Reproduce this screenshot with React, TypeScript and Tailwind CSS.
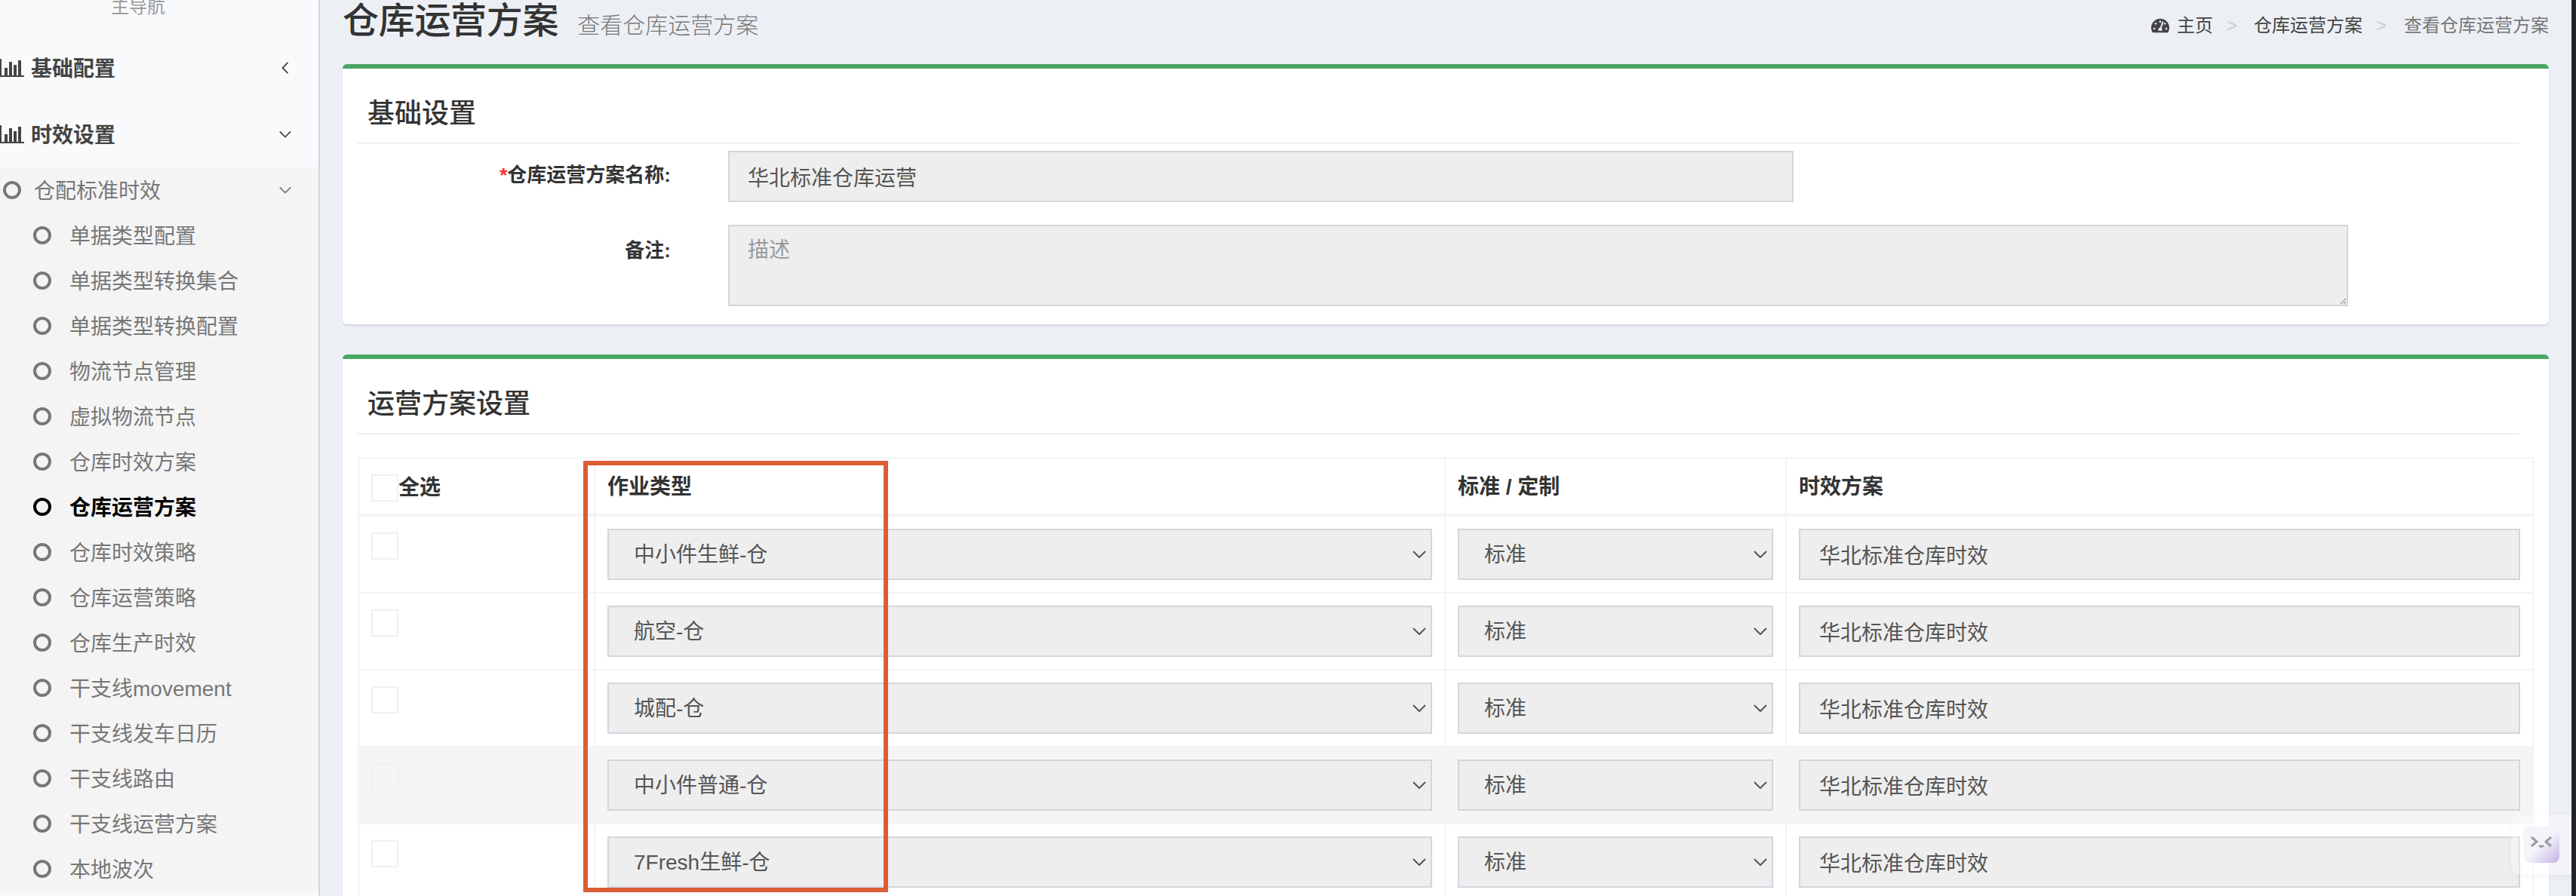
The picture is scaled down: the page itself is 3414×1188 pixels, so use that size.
import React from "react";
import { FaTachometerAlt } from "react-icons/fa";

const font = "font-['Liberation_Sans','Noto_Sans_CJK_SC',sans-serif]";

function Chevron({ dir, className }: { dir: "down" | "left"; className: string }) {
  return dir === "down" ? (
    <svg viewBox="0 0 18 10" className={className} fill="none" stroke="currentColor" strokeWidth="2">
      <polyline points="1,1 9,9 17,1" />
    </svg>
  ) : (
    <svg viewBox="0 0 10 18" className={className} fill="none" stroke="currentColor" strokeWidth="2">
      <polyline points="9,1 1,9 9,17" />
    </svg>
  );
}

function BarIcon() {
  return (
    <svg viewBox="0 0 32 24" className="w-[32px] h-[24px] shrink-0" fill="currentColor">
      <rect x="0" y="0" width="2" height="24" />
      <rect x="0" y="22" width="32" height="2" />
      <rect x="6" y="12" width="4" height="10" />
      <rect x="12" y="4" width="4" height="18" />
      <rect x="18" y="8" width="4" height="14" />
      <rect x="24" y="2" width="4" height="20" />
    </svg>
  );
}

function Ring({ active }: { active?: boolean }) {
  return (
    <span
      className={
        active
          ? "block w-[24px] h-[24px] rounded-full border-[4px] border-black shrink-0"
          : "block w-[24px] h-[24px] rounded-full border-[4px] border-[#777777] shrink-0"
      }
    />
  );
}

function TopItem({ label, dir }: { label: string; dir: "down" | "left" }) {
  return (
    <div className="flex items-center h-[88px] text-[#444444]">
      <BarIcon />
      <span className="ml-[9px] pt-[3px] text-[28px] font-bold">{label}</span>
      <span className="ml-auto w-[16px] mr-[36px] flex justify-center">
        {dir === "down" ? (
          <Chevron dir="down" className="w-[16px] h-[10px]" />
        ) : (
          <Chevron dir="left" className="w-[10px] h-[16px]" />
        )}
      </span>
    </div>
  );
}

const subItems = [
  "单据类型配置",
  "单据类型转换集合",
  "单据类型转换配置",
  "物流节点管理",
  "虚拟物流节点",
  "仓库时效方案",
  "仓库运营方案",
  "仓库时效策略",
  "仓库运营策略",
  "仓库生产时效",
  "干支线movement",
  "干支线发车日历",
  "干支线路由",
  "干支线运营方案",
  "本地波次",
];

function Sidebar() {
  return (
    <aside className="w-[424px] shrink-0 h-full bg-[#f9fafc] border-r-2 border-[#d2d6de] overflow-hidden">
      <div className="h-[46px] -mt-[14px] flex items-center justify-center pr-[56px] text-[24px] text-[#999999] leading-none">
        <span>主导航</span>
      </div>
      <div className="h-[14px]" />
      <TopItem label="基础配置" dir="left" />
      <TopItem label="时效设置" dir="down" />
      <div className="bg-[#f4f4f5]">
        <div className="h-[60px] flex items-center pl-[4px] text-[#777777]">
          <Ring />
          <span className="ml-[17px] pt-[3px] text-[28px]">仓配标准时效</span>
          <span className="ml-auto mr-[36px] flex">
            <Chevron dir="down" className="w-[16px] h-[10px]" />
          </span>
        </div>
        {subItems.map((s) => {
          const active = s === "仓库运营方案";
          return (
            <div
              key={s}
              className={
                active
                  ? "h-[60px] flex items-center pl-[44px] text-black font-bold"
                  : "h-[60px] flex items-center pl-[44px] text-[#777777]"
              }
            >
              <Ring active={active} />
              <span className="ml-[24px] pt-[3px] text-[28px]">{s}</span>
            </div>
          );
        })}
      </div>
    </aside>
  );
}

function Card({ title, children, bodyClass }: { title: string; children: React.ReactNode; bodyClass: string }) {
  return (
    <section className={`bg-white rounded-[6px] border-t-[6px] border-[#49a564] shadow-[0_2px_2px_rgba(0,0,0,0.1)] px-[20px] ${bodyClass}`}>
      <h3 className="h-[100px] mr-[20px] border-b-2 border-[#f0f0f0] flex items-center pl-[13px] pt-[22px] text-[36px] font-medium text-[#333333]">
        {title}
      </h3>
      {children}
    </section>
  );
}

function SelectBox({ value, options, className }: { value: string; options: string[]; className: string }) {
  return (
    <div className={`relative ${className}`}>
      <select
        disabled
        value={value}
        className="block w-full h-[68px] appearance-none bg-[#eeeeee] border-2 border-[#d2d6de] pl-[33px] pt-[2px] text-[28px] text-[#555555] opacity-100"
      >
        {options.map((o) => (
          <option key={o} value={o}>
            {o}
          </option>
        ))}
      </select>
      <span className="absolute right-[8px] top-[29px] text-[#555555] flex">
        <Chevron dir="down" className="w-[18px] h-[10px]" />
      </span>
    </div>
  );
}

const rows = ["中小件生鲜-仓", "航空-仓", "城配-仓", "中小件普通-仓", "7Fresh生鲜-仓"];

const gridCols = "grid grid-cols-[313px_1127px_452px_988px]";

function PlanTable() {
  return (
    <div className="mt-[30px] border-2 border-b-0 border-[#f4f4f4]">
      <div className={`${gridCols} h-[77px] border-b-[4px] border-[#f4f4f4] text-[28px] font-bold text-[#333333]`}>
        <div className="border-r-2 border-[#f4f4f4] pl-[16px] pt-[21px] flex items-start">
          <span className="block w-[36px] h-[36px] border-2 border-[#f0f0f0] bg-white shrink-0" />
          <span className="leading-[32px] pt-[2px]">全选</span>
        </div>
        <div className="border-r-2 border-[#f4f4f4] pl-[16px] pt-[22px] leading-[32px]">作业类型</div>
        <div className="border-r-2 border-[#f4f4f4] pl-[16px] pt-[22px] leading-[32px]">标准 / 定制</div>
        <div className="pl-[16px] pt-[22px] leading-[32px]">时效方案</div>
      </div>
      {rows.map((r, i) => (
        <div
          key={r}
          className={
            i === 3
              ? `${gridCols} h-[102px] border-b-2 border-[#f4f4f4] bg-[#f5f5f5]`
              : `${gridCols} h-[102px] border-b-2 border-[#f4f4f4]`
          }
        >
          <div className="border-r-2 border-[#f4f4f4] pl-[16px] pt-[21px]">
            <span className={i === 3 ? "block w-[36px] h-[36px] border-2 border-[#f0f0f0]" : "block w-[36px] h-[36px] border-2 border-[#f0f0f0] bg-white"} />
          </div>
          <div className="border-r-2 border-[#f4f4f4] px-[16px] pt-[16px]">
            <SelectBox value={r} options={rows} className="w-full" />
          </div>
          <div className="border-r-2 border-[#f4f4f4] px-[16px] pt-[16px]">
            <SelectBox value="标准" options={["标准", "定制"]} className="w-full" />
          </div>
          <div className="px-[16px] pt-[16px]">
            <input
              readOnly
              value="华北标准仓库时效"
              className="block w-full h-[68px] bg-[#eeeeee] border-2 border-[#d2d6de] px-[25px] text-[28px] text-[#555555] outline-none"
            />
          </div>
        </div>
      ))}
    </div>
  );
}

export default function App() {
  return (
    <div className={`${font} flex w-[3414px] h-[1188px] overflow-hidden bg-[#ecf0f5]`}>
      <Sidebar />
      <main className="relative w-[2984px] h-full overflow-hidden px-[30px]">
        <header className="h-[85px] flex justify-between">
          <div className="flex items-baseline h-[54px] pt-[1px]">
            <h1 className="text-[48px] leading-[54px] tracking-[-0.3px] font-medium text-[#333333]">仓库运营方案</h1>
            <small className="ml-[25px] text-[30px] font-light text-[#777777]">查看仓库运营方案</small>
          </div>
          <nav className="flex items-center h-[34px] mt-[17px] text-[24px] text-[#444444]">
            <FaTachometerAlt className="w-[24px] h-[24px]" />
            <span className="ml-[10px]">主页</span>
            <span className="ml-[18px] mr-[22px] text-[#cccccc]">&gt;</span>
            <span>仓库运营方案</span>
            <span className="ml-[18px] mr-[23px] text-[#cccccc]">&gt;</span>
            <span className="text-[#777777]">查看仓库运营方案</span>
          </nav>
        </header>

        <Card title="基础设置" bodyClass="h-[345px]">
          <div className="flex mt-[9px]">
            <label className="w-[415px] text-right text-[26px] font-bold text-[#333333] leading-[68px] -mt-[2px]">
              <span className="text-[#f5322d]">*</span>仓库运营方案名称:
            </label>
            <input
              readOnly
              value="华北标准仓库运营"
              className="ml-[76px] w-[1412px] h-[68px] bg-[#eeeeee] border-2 border-[#d2d6de] px-[24px] text-[28px] text-[#555555] outline-none"
            />
          </div>
          <div className="flex mt-[30px]">
            <label className="w-[415px] text-right text-[26px] font-bold text-[#333333] leading-[68px]">备注:</label>
            <textarea
              readOnly
              placeholder="描述"
              className="ml-[76px] w-[2147px] h-[108px] bg-[#eeeeee] border-2 border-[#d2d6de] px-[24px] py-[14px] text-[28px] leading-[36px] text-[#555555] placeholder:text-[#999999] outline-none"
            />
          </div>
        </Card>

        <div className="h-[40px]" />

        <Card title="运营方案设置" bodyClass="pb-[40px]">
          <PlanTable />
        </Card>

        <div className="absolute left-[349px] top-[611px] w-[404px] h-[572px] border-[6px] border-[#dc5c36]" />

        <div className="absolute left-[2904px] top-[1080px] w-[100px] h-[80px] rounded-l-[10px] bg-white/30 shadow-[0_2px_8px_rgba(0,0,0,0.05)] pl-[16px] pt-[16px]">
          <div className="w-[48px] h-[48px] rounded-[8px] bg-gradient-to-br from-[#f4f5f9] from-50% to-[#c6aee6]">
            <svg viewBox="0 0 48 48" className="w-[48px] h-[48px]" fill="none" stroke="#9b9ca3" strokeWidth="3">
              <polyline points="11,14 18,20 11,26" />
              <polyline points="37,14 30,20 37,26" />
              <path d="M21 25 Q24 28 27 25" />
            </svg>
          </div>
        </div>
      </main>
      <div className="w-[6px] h-full bg-[#222326] shrink-0" />
    </div>
  );
}
